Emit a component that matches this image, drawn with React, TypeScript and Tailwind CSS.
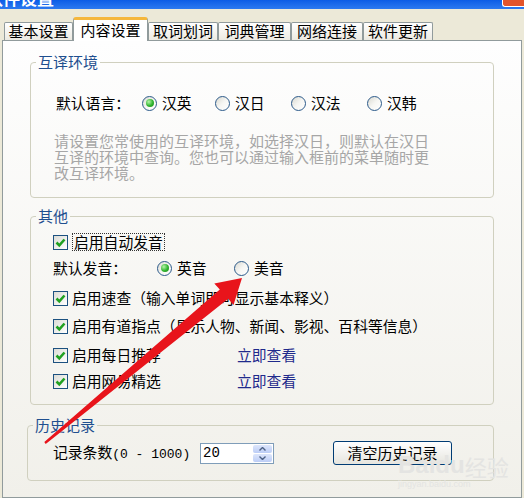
import React from "react";

const tabs = [
  { label: "基本设置", w: "w-[69px]" },
  { label: "内容设置", w: "w-[75px]", active: true },
  { label: "取词划词", w: "w-[70px]" },
  { label: "词典管理", w: "w-[73px]" },
  { label: "网络连接", w: "w-[72px]" },
  { label: "软件更新", w: "w-[70px]" },
];

function Radio({ checked }: { checked?: boolean }) {
  return (
    <span className="w-[15px] h-[15px] shrink-0 rounded-full border border-[#2c5a8a] bg-linear-to-br from-[#d9d9d1] via-[#f6f6f3] to-white flex items-center justify-center">
      {checked && (
        <span className="w-[8px] h-[8px] rounded-full bg-[radial-gradient(circle_at_35%_35%,#b6f5a8,#2fb32f_55%,#1c8a1c)]" />
      )}
    </span>
  );
}

function Checkbox() {
  return (
    <span className="w-[15px] h-[15px] shrink-0 border border-[#1c5180] bg-linear-to-br from-[#dcdcd6] to-white flex items-center justify-center">
      <svg width="11" height="11" viewBox="0 0 11 11">
        <path d="M1.5 5.5 L4.3 8.3 L9.5 2.5" fill="none" stroke="#21a121" strokeWidth="2.6" />
      </svg>
    </span>
  );
}

function CheckRow({ label, link, focus, className }: { label: string; link?: boolean; focus?: boolean; className?: string }) {
  return (
    <div className={`flex items-center h-[20px] ${className ?? ""}`}>
      <div className={`flex items-center gap-[4px] ${link ? "w-[184px]" : ""}`}>
        <Checkbox />
        <span className={focus ? "border border-dotted border-[#333] px-[1px] leading-[16px]" : ""}>{label}</span>
      </div>
      {link && <span className="text-[#1f2a8c]">立即查看</span>}
    </div>
  );
}

export default function App() {
  return (
    <div className="relative w-[524px] h-[498px] overflow-hidden bg-[#ece9d8] flex flex-col font-['Noto_Sans_CJK_SC','Liberation_Sans',sans-serif] text-[14.8px] text-black">
      {/* title bar (mostly cropped) */}
      <div className="relative h-[9px] shrink-0 overflow-hidden bg-linear-to-b from-[#0a5ce6] to-[#2b79f0]">
        <span className="absolute left-[-14px] top-[-12px] text-[17px] font-bold text-white leading-[20px]">软件设置</span>
        <span className="absolute right-0 top-0 w-[22px] h-[7px] bg-[#e2542c] border-l border-b border-white rounded-bl-[3px]" />
      </div>

      {/* tabs */}
      <div className="relative z-10 flex items-end h-[24px] mt-[8px] -mb-px pl-[4px] text-[15px]">
        {tabs.map((t) =>
          t.active ? (
            <div
              key={t.label}
              className={`${t.w} h-[24px] flex items-center justify-center bg-white border-x border-[#919b9c] border-t-[3px] border-t-[#f5b73c] rounded-t-[3px]`}
            >
              {t.label}
            </div>
          ) : (
            <div
              key={t.label}
              className={`${t.w} h-[18px] mb-px flex items-center justify-center bg-linear-to-b from-white to-[#eceae2] border-x border-t border-[#919b9c] rounded-t-[2px]`}
            >
              {t.label}
            </div>
          )
        )}
      </div>

      {/* panel */}
      <div className="ml-[2px] w-[520px] flex-1 border border-[#919b9c] bg-linear-to-b from-[#fefefe] to-[#f1f0ea] flex flex-col">
        {/* 互译环境 */}
        <fieldset className="mt-[12px] ml-[27px] w-[464px] border border-[#d0d0bf] rounded-[4px] pl-[25px] pt-[22px] pb-[16px]">
          <legend className="-ml-[20px] px-[2px] text-[15px] leading-[18px] text-[#1f4f8f]">互译环境</legend>
          <div className="flex items-center h-[20px]">
            <span className="w-[86px]">默认语言：</span>
            <label className="w-[73px] flex items-center gap-[5px]"><Radio checked />汉英</label>
            <label className="w-[76px] flex items-center gap-[5px]"><Radio />汉日</label>
            <label className="w-[76px] flex items-center gap-[5px]"><Radio />汉法</label>
            <label className="flex items-center gap-[5px]"><Radio />汉韩</label>
          </div>
          <p className="mt-[20px] -ml-[2px] text-[15px] leading-[16px] text-[#a6a6a6]">
            请设置您常使用的互译环境，如选择汉日，则默认在汉日
            <br />
            互译的环境中查询。您也可以通过输入框前的菜单随时更
            <br />
            改互译环境。
          </p>
        </fieldset>

        {/* 其他 */}
        <fieldset className="mt-[9px] ml-[27px] w-[464px] border border-[#d0d0bf] rounded-[4px] pl-[22px] pt-[7px] pb-[13px]">
          <legend className="-ml-[17px] px-[2px] text-[15px] leading-[18px] text-[#1f4f8f]">其他</legend>
          <CheckRow label="启用自动发音" focus />
          <div className="flex items-center h-[20px] mt-[6px]">
            <span className="w-[104px]">默认发音：</span>
            <label className="w-[77px] flex items-center gap-[5px]"><Radio checked />英音</label>
            <label className="flex items-center gap-[5px]"><Radio />美音</label>
          </div>
          <CheckRow label="启用速查（输入单词即可显示基本释义）" className="mt-[10px]" />
          <CheckRow label="启用有道指点（显示人物、新闻、影视、百科等信息）" className="mt-[8px]" />
          <CheckRow label="启用每日推荐" link className="mt-[9px]" />
          <CheckRow label="启用网易精选" link className="mt-[6px]" />
        </fieldset>

        {/* 历史记录 */}
        <fieldset className="mt-[11px] ml-[24px] w-[467px] border border-[#d0d0bf] rounded-[4px] pl-[25px] pt-[7px] pb-[15px]">
          <legend className="-ml-[20px] px-[2px] text-[15px] leading-[18px] text-[#1f4f8f]">历史记录</legend>
          <div className="flex items-center h-[24px]">
            <span className="w-[147px] whitespace-nowrap">
              记录条数<span className="font-['Liberation_Mono',monospace] text-[13px]">(0 - 1000)</span>
            </span>
            <div className="w-[74px] h-[21px] border border-[#7f9db9] bg-white flex">
              <span className="flex-1 pl-[2px] leading-[19px] font-['Liberation_Mono',monospace] text-[14px]">20</span>
              <div className="w-[19px] m-px flex flex-col gap-px">
                <span className="flex-1 bg-linear-to-b from-[#dde6fb] to-[#bccdf6] rounded-[2px] flex items-center justify-center">
                  <svg width="7" height="4" viewBox="0 0 7 4"><path d="M0.5 3.5 L3.5 0.5 L6.5 3.5" fill="none" stroke="#4d6185" strokeWidth="1.4" /></svg>
                </span>
                <span className="flex-1 bg-linear-to-b from-[#dde6fb] to-[#bccdf6] rounded-[2px] flex items-center justify-center">
                  <svg width="7" height="4" viewBox="0 0 7 4"><path d="M0.5 0.5 L3.5 3.5 L6.5 0.5" fill="none" stroke="#4d6185" strokeWidth="1.4" /></svg>
                </span>
              </div>
            </div>
            <button className="ml-[59px] w-[119px] h-[24px] border border-[#003c74] rounded-[3px] bg-linear-to-b from-white to-[#e6e5de] text-[15px] flex items-center justify-center">
              清空历史记录
            </button>
          </div>
        </fieldset>
      </div>

      {/* baidu watermark */}
      <div className="absolute left-[398px] top-[453px] pointer-events-none text-[#e4e4e2] leading-none">
        <div className="flex items-end font-['Liberation_Sans',sans-serif] font-bold text-[24px]">
          Baidu<span className="font-['Noto_Sans_CJK_SC',sans-serif] text-[22px] font-normal">经验</span>
        </div>
        <div className="mt-[3px] text-[9px] font-['Liberation_Sans',sans-serif]">jingyan.baidu.com</div>
      </div>

      {/* red arrow annotation */}
      <svg className="absolute inset-0 pointer-events-none" width="524" height="498" viewBox="0 0 524 498">
        <polygon
          points="242,278 233.5,305 228.2,298.8 45.7,443.9 44.3,442.1 219.8,289.6 214.3,283.5"
          fill="#e8141b"
        />
      </svg>
    </div>
  );
}
